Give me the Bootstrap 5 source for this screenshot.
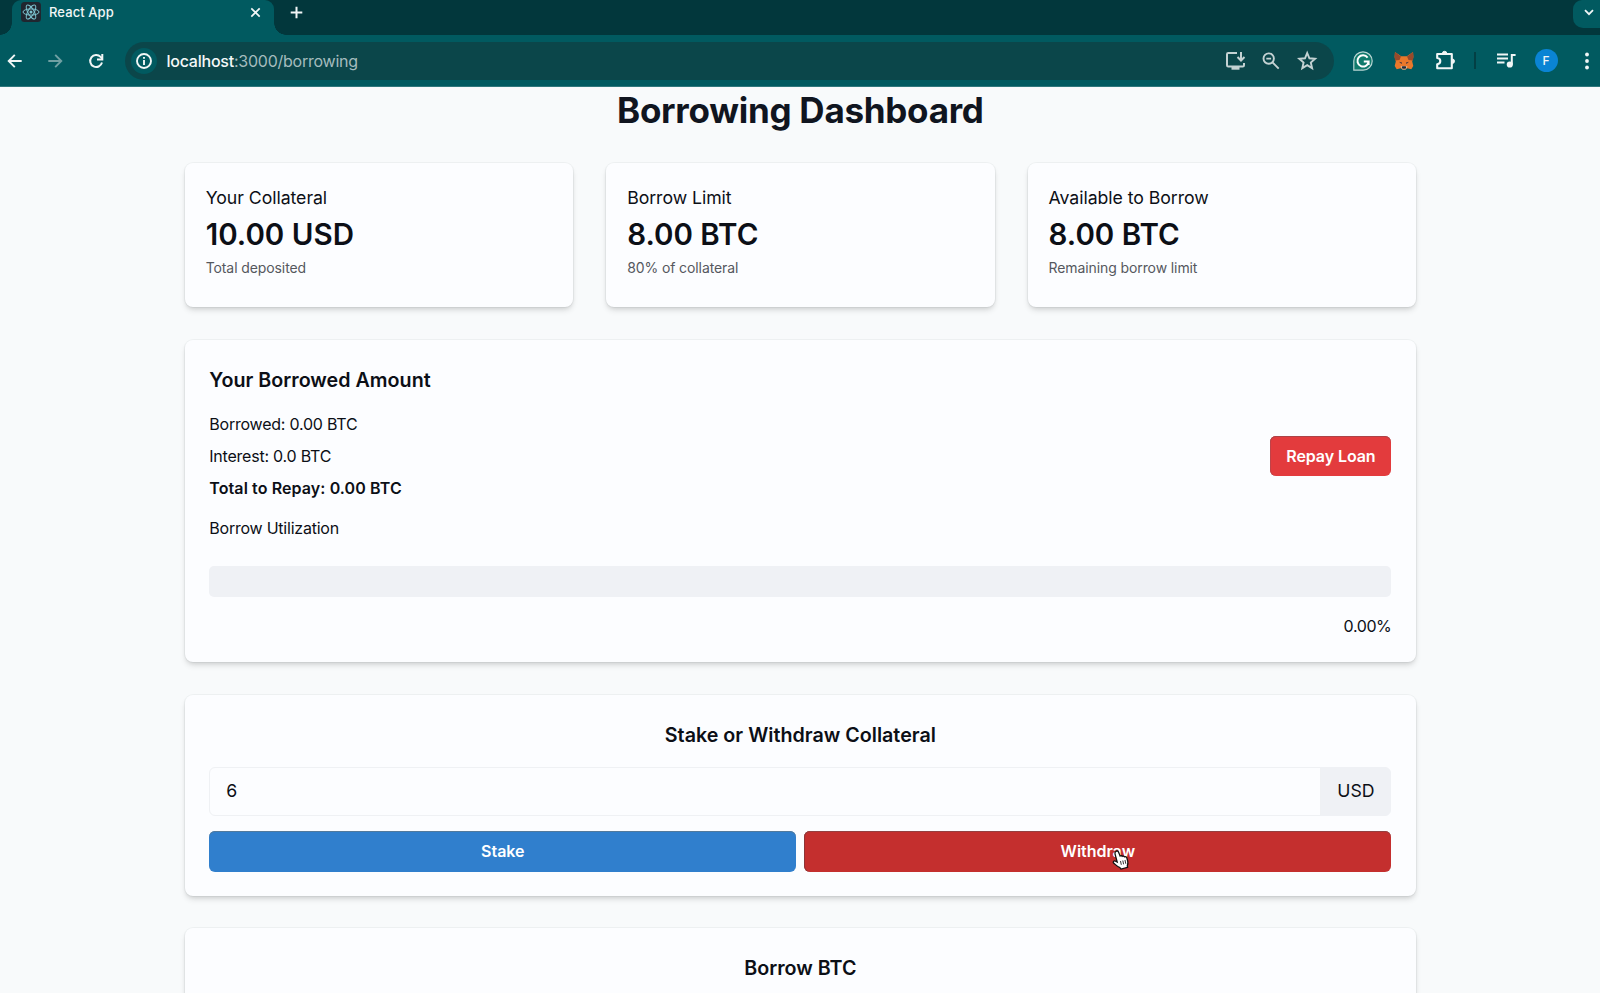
<!DOCTYPE html>
<html lang="en">
<head>
<meta charset="utf-8">
<meta name="viewport" content="width=device-width, initial-scale=1">
<title>React App</title>
<link href="https://cdn.jsdelivr.net/npm/bootstrap@5.3.0/dist/css/bootstrap.min.css" rel="stylesheet">
<style>
  body { font-family: Inter, "Liberation Sans", sans-serif; font-size: 16px; line-height: 24px; color: #0c0f16; background: #f8fafb; height: 100vh; overflow: hidden; }
  svg { display: block; flex: none; }

  /* browser chrome */
  .tabstrip { height: 35px; background: #02373c; padding-left: 12px; color: #f1f6f6; }
  .tab-active { position: relative; width: 262px; height: 35px; background: #015a60; padding: 0 13px 11px 9px; border-radius: 9px 9px 0 0; font-size: 13px; font-weight: 500; letter-spacing: .08px; line-height: 16px; }
  .tab-active::before, .tab-active::after { content: ""; position: absolute; bottom: 0; width: 12px; height: 12px; }
  .tab-active::before { left: -12px; background: radial-gradient(circle at 0 0, #02373c 11.5px, #015a60 12px); }
  .tab-active::after { right: -12px; background: radial-gradient(circle at 100% 0, #02373c 11.5px, #015a60 12px); }
  .tab-search { width: 27px; height: 28px; background: #015a60; border-radius: 9px 0 0 10px; padding: 0 0 4px 4px; }
  .toolbar { height: 52px; background: #015a60; border-bottom: 1px solid #2f777c; padding-left: 5px; color: #f1f6f6; }
  .omnibox { height: 38px; background: #0b464a; border-radius: 19px; margin: 1px 17px 0 19px; padding: 0 15px 0 6px; }
  .site-info { width: 26px; height: 26px; background: #015a60; }
  .url { font-size: 16px; letter-spacing: -.24px; color: #a5bcbe; margin-left: 9.5px; }
  .url b { font-weight: 500; color: #f4f8f8; }
  .tool-sep { width: 2px; height: 17px; background: #033f44; }
  .avatar { width: 23px; height: 23px; background: #0a84d4; font-size: 12px; font-weight: 500; line-height: 1; }

  /* page */
  .page-wrap { width: 1232px; padding: 1px 0 0 .7px; }
  .page-title { font-size: 35px; line-height: 44px; font-weight: 700; letter-spacing: -.26px; margin-bottom: 31.4px; color: #10151f; }
  .panel { background: #fcfdff; border-radius: 8px; box-shadow: 0 0 0 1px rgba(30,40,60,.04), 0 4px 6px -1px rgba(0,0,0,.13), 0 2px 4px -1px rgba(0,0,0,.08); padding: 25px 24.6px 24.3px; margin-bottom: 32.5px; }
  .stats { display: grid; grid-template-columns: repeat(3, 1fr); gap: 33px; margin-bottom: 33px; }
  .stat-panel { height: 143.8px; padding: 20.5px 21px; margin: 0; }
  .stat-label { font-size: 17.7px; line-height: 27px; letter-spacing: -.05px; }
  .stat-value { font-size: 29.5px; line-height: 37px; font-weight: 600; letter-spacing: 0; margin: 5px 0 4px; }
  .stat-help { font-size: 14px; line-height: 21px; letter-spacing: -.1px; color: #55585e; }
  .panel-title { font-size: 19.7px; line-height: 31px; font-weight: 600; letter-spacing: .01px; margin-bottom: 15.6px; }
  .lines { gap: 8.2px; letter-spacing: -.22px; }
  .lines b { font-weight: 600; letter-spacing: .1px; }
  .util-label { letter-spacing: -.23px; margin: 16.2px 0 25.3px; }
  .util-track { height: 31.5px; background: #eff1f5; border-radius: 5px; margin-bottom: 17px; }
  .util-value { letter-spacing: -.4px; }
  .action { height: 40.5px; border: 0; border-radius: 6px; color: #fff; font-weight: 600; font-size: 16px; line-height: 24px; padding: 0 16px; letter-spacing: -.03px; }
  .action-red { background: #e33b3d; box-shadow: inset 0 1px 0 #ab4347, inset 1px 0 0 #c04348; }
  .action-blue { background: #307fcd; box-shadow: inset 0 1px 0 #527a9c; }
  .action-dark { background: #c42f2e; box-shadow: inset 0 1px 0 #944040, inset 1px 0 0 #8d3436; }
  .repay { width: 121px; padding: 0; letter-spacing: -.1px; }
  .amount { height: 49px; margin-bottom: 15.5px; }
  .amount .form-control { font-size: 17.7px; padding: 1px 16px 0; background: transparent; border-color: #eff1f4; border-radius: 6px; color: #0c0f16; }
  .amount .input-group-text { width: 71px; padding: 1px 0 0; font-size: 17.7px; background: #eff1f5; border-color: #eff1f5; border-radius: 6px; color: #0c0f16; }
  .hand { position: absolute; left: 307px; top: 17.5px; }
</style>
</head>
<body class="d-flex flex-column">

<header class="flex-shrink-0">
  <div class="tabstrip d-flex align-items-start">
    <div class="tab-active d-flex align-items-center">
      <svg width="20" height="20" viewBox="0 0 20 20" fill="none" stroke="#7cc3cf"><rect width="20" height="20" rx="3.5" fill="#20262f" stroke="none"/><ellipse cx="10" cy="10" rx="8" ry="3.1"/><ellipse cx="10" cy="10" rx="8" ry="3.1" transform="rotate(60 10 10)"/><ellipse cx="10" cy="10" rx="8" ry="3.1" transform="rotate(120 10 10)"/><circle cx="10" cy="10" r="1.5" fill="#7cc3cf" stroke="none"/></svg>
      <span class="ms-2">React App</span>
      <svg class="ms-auto" width="11" height="11" viewBox="0 0 11 11" stroke="#f1f6f6" stroke-width="1.7"><path d="M1.3 1.3l8.4 8.4M9.7 1.3L1.3 9.7"/></svg>
    </div>
    <svg style="margin:6px 0 0 15.500px" width="13" height="13" viewBox="0 0 13 13" stroke="#f1f6f6" stroke-width="2"><path d="M6.5.7v11.6M.7 6.5h11.6"/></svg>
    <div class="tab-search ms-auto d-flex align-items-center justify-content-center"><svg width="10" height="7" viewBox="0 0 10 7" fill="none" stroke="#f1f6f6" stroke-width="1.8"><path d="M1 1.2l4 4 4-4"/></svg></div>
  </div>

  <div class="toolbar d-flex align-items-center">
    <svg width="20" height="20" viewBox="0 0 20 20" fill="none" stroke="#f1f6f6" stroke-width="1.9"><path d="M16.7 10H4M9.8 3.9L3.7 10l6.1 6.1"/></svg>
    <svg style="margin-left:20px" width="20" height="20" viewBox="0 0 20 20" fill="none" stroke="#6fa0a3" stroke-width="1.9"><path d="M3.3 10H16M10.2 3.9l6.1 6.1-6.1 6.1"/></svg>
    <svg style="margin-left:21px" width="20" height="20" viewBox="0 0 20 20" fill="none" stroke="#f1f6f6" stroke-width="2"><path d="M16 11.6A6 6 0 1 1 14.6 5.9L16.2 7.7"/><path d="M16.3 3.1v5.3H11"/></svg>
    <div class="omnibox flex-grow-1 d-flex align-items-center">
      <div class="site-info rounded-circle d-flex align-items-center justify-content-center">
        <svg width="18" height="18" viewBox="0 0 18 18" fill="none" stroke="#f1f6f6" stroke-width="1.9"><circle cx="9" cy="9" r="7"/><path d="M9 8v5M9 4.9v1.9"/></svg>
      </div>
      <span class="url"><b>localhost</b>:3000/borrowing</span>
      <svg class="ms-auto" width="24" height="24" viewBox="0 0 24 24" fill="none" stroke="#c4d2d3" stroke-width="2"><path d="M14 4H5.200Q4 4 4 5.200V16.300Q4 17.500 5.200 17.500H19.800Q21 17.500 21 16.300V14"/><path d="M8.500 19.200h8" stroke-width="3"/><path d="M18 3v8M14.500 8l3.500 3.500L21.500 8"/></svg>
      <svg style="margin-left:12px" width="24" height="24" viewBox="0 0 24 24" fill="none" stroke="#c4d2d3" stroke-width="1.900"><circle cx="9.700" cy="9.600" r="5.200"/><path d="M13.500 13.400l6.200 6.200M7.300 9.600h4.800"/></svg>
      <svg style="margin-left:12px" width="24" height="24" viewBox="0 0 24 24" fill="none" stroke="#c4d2d3" stroke-width="1.900"><path d="M12.200 4l2.200 5.300 5.700.5-4.300 3.750 1.300 5.600-4.900-3-4.900 3 1.300-5.600-4.300-3.750 5.700-.5z"/></svg>
    </div>
    <svg width="24" height="24" viewBox="0 0 24 24"><path d="M2.800 21.200V12A9.200 9.200 0 1 1 12 21.200z" fill="#107a6c" stroke="#b9d4d3" stroke-width="1.200"/><path d="M16.600 8.700A5.600 5.600 0 1 0 17.600 12.600H12.800M17.600 12.200V16" fill="none" stroke="#fff" stroke-width="2"/></svg>
    <svg style="margin-left:17px" width="24" height="24" viewBox="0 0 24 24"><path d="M3 3l6.200 4.300h5.600L21 3l.4 5-1.200 4.500L21.300 17l-2 3.200-4-1-2 1.300h-2.600l-2-1.300-4 1-2-3.200 1.100-4.500L2.600 8z" fill="#e9782b"/><path d="M3 3l6 4.400-1.500 3.700-4.400.5L2.500 8zM21 3l-6 4.400 1.500 3.700 4.400.5.600-3.600z" fill="#974a2b"/><path d="M7 12.800l3 .7-.4 1.500zM17 12.800l-3 .7.400 1.500z" fill="#3b3340"/><path d="M8.500 17.500l2-.5h3l2 .5-1.800 3h-3.400z" fill="#d8bfa8"/><path d="M10.200 17.300h3.600l.3 1.700-.8.700h-2.600l-.8-.7z" fill="#252b36"/></svg>
    <svg style="margin-left:17px" width="24" height="24" viewBox="0 0 24 24" fill="none" stroke="#f1f6f6" stroke-width="2.100" stroke-linejoin="round"><path d="M4.200 5H18.800V19.200H4.200V15.200Q7.300 14.900 7.300 12.100T4.200 9z"/><path d="M9.400 4.500a2.200 2.200 0 0 1 4.400 0zM19.300 10a2.200 2.200 0 0 1 0 4.400z" fill="#f1f6f6" stroke-width="1"/></svg>
    <div class="tool-sep" style="margin-left:17px"></div>
    <svg style="margin-left:17.500px" width="24" height="24" viewBox="0 0 24 24" fill="none" stroke="#f1f6f6" stroke-width="2"><path d="M3 5.500h11M3 9.500h11M3 13.500h7.500"/><path d="M17.800 15.500V6h3.800"/><circle cx="15.800" cy="15.500" r="2.100" fill="#f1f6f6"/></svg>
    <div class="avatar rounded-circle d-flex align-items-center justify-content-center" style="margin-left:17px">F</div>
    <svg style="margin:0 1.500px 0 17px" width="24" height="24" viewBox="0 0 24 24" fill="#f1f6f6"><circle cx="12" cy="5.500" r="1.900"/><circle cx="12" cy="12" r="1.900"/><circle cx="12" cy="18.500" r="1.900"/></svg>
  </div>
</header>

<main class="flex-grow-1 overflow-hidden">
  <div class="page-wrap mx-auto">
    <h1 class="page-title text-center">Borrowing Dashboard</h1>

    <section class="stats">
      <div class="panel stat-panel">
        <div class="stat-label">Your Collateral</div>
        <div class="stat-value">10.00 USD</div>
        <div class="stat-help">Total deposited</div>
      </div>
      <div class="panel stat-panel">
        <div class="stat-label">Borrow Limit</div>
        <div class="stat-value">8.00 BTC</div>
        <div class="stat-help">80% of collateral</div>
      </div>
      <div class="panel stat-panel">
        <div class="stat-label">Available to Borrow</div>
        <div class="stat-value">8.00 BTC</div>
        <div class="stat-help">Remaining borrow limit</div>
      </div>
    </section>

    <section class="panel">
      <h2 class="panel-title">Your Borrowed Amount</h2>
      <div class="d-flex justify-content-between align-items-center">
        <div class="lines d-flex flex-column">
          <div>Borrowed: 0.00 BTC</div>
          <div>Interest: 0.0 BTC</div>
          <b>Total to Repay: 0.00 BTC</b>
        </div>
        <button type="button" class="btn action action-red repay text-nowrap">Repay Loan</button>
      </div>
      <div class="util-label">Borrow Utilization</div>
      <div class="util-track"></div>
      <div class="util-value text-end">0.00%</div>
    </section>

    <section class="panel">
      <h2 class="panel-title text-center">Stake or Withdraw Collateral</h2>
      <div class="input-group amount">
        <input type="text" class="form-control" value="6" aria-label="Amount">
        <span class="input-group-text justify-content-center">USD</span>
      </div>
      <div class="d-flex gap-2">
        <button type="button" class="btn action action-blue w-50">Stake</button>
        <button type="button" class="btn action action-dark w-50 position-relative">Withdraw
          <svg class="hand" width="20" height="22" viewBox="0 0 20 22"><path d="M5.300 2.200c1-.5 1.900.1 2.300 1.100l1.500 3.600c.6-.5 1.600-.4 2.100.4.800-.6 1.800-.3 2.200.5 1.300-.5 2.200.2 2.500 1.300l.8 3c.4 1.700.2 3.200-.4 4.600l.3 1.600-6.600 1.800-1-1.400c-2.200-.6-4-2.600-6.200-4.500-1.500-1.300.2-3 1.800-2l1.600.8-2.200-8.200c-.3-1.100.3-2.100 1.300-2.600z" fill="#fff" stroke="#111" stroke-width="1.300"/><path d="M9.500 12l.8 3.800M11.800 11.500l.8 3.800M14 11l.8 3.800" stroke="#333" stroke-width="1"/></svg>
        </button>
      </div>
    </section>

    <section class="panel">
      <h2 class="panel-title text-center">Borrow BTC</h2>
    </section>
  </div>
</main>

<script src="https://cdn.jsdelivr.net/npm/bootstrap@5.3.0/dist/js/bootstrap.bundle.min.js"></script>
</body>
</html>
